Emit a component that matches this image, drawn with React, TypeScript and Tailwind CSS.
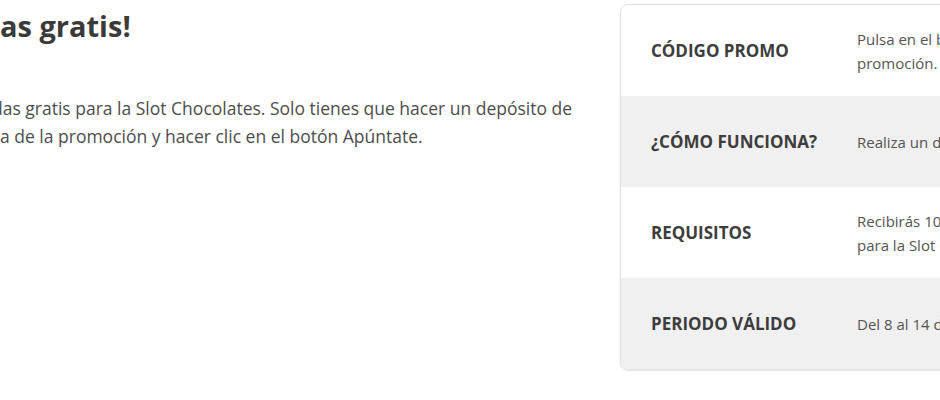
import React from "react";

const rows = [
  {
    label: "CÓDIGO PROMO",
    value: ["Pulsa en el botón Apúntate de la", "promoción."],
    bg: "bg-white",
  },
  {
    label: "¿CÓMO FUNCIONA?",
    value: ["Realiza un depósito de 20€ o más."],
    bg: "bg-[#f0f0f0]",
  },
  {
    label: "REQUISITOS",
    value: ["Recibirás 10 tiradas gratis", "para la Slot Chocolates."],
    bg: "bg-white",
  },
  {
    label: "PERIODO VÁLIDO",
    value: ["Del 8 al 14 de junio."],
    bg: "bg-[#f0f0f0]",
  },
];

export default function App() {
  return (
    <div className="flex h-[400px] w-[940px] overflow-hidden bg-white font-['Open_Sans',sans-serif]">
      {/* Intro column, scrolled off to the left */}
      <div className="w-[620px] shrink-0 pt-[8px]">
        <h2 className="text-[29px] font-bold leading-[36px] text-[#3a3a3a]">as gratis!</h2>
        <p className="mt-[50px] w-[610px] text-[17.5px] leading-[28px] text-[#4d4d4d] -indent-[8px]">
          das gratis para la Slot Chocolates. Solo tienes que hacer un depósito de
          <br />a de la promoción y hacer clic en el botón Apúntate.
        </p>
      </div>

      {/* Promo table */}
      <div className="mt-[4px] w-[560px] shrink-0 self-start overflow-hidden rounded-lg border border-[#e0e0e0] shadow-[0_1px_2px_rgba(0,0,0,0.1)]">
        {rows.map((row) => (
          <div key={row.label} className={`flex h-[91px] items-center ${row.bg}`}>
            <div className="w-[236px] shrink-0 pl-[30px] text-[17px] font-bold text-[#3d3d3d]">
              {row.label}
            </div>
            <div className="whitespace-nowrap text-[15px] leading-6 text-[#555]">
              {row.value.map((line) => (
                <div key={line}>{line}</div>
              ))}
            </div>
          </div>
        ))}
      </div>
    </div>
  );
}
